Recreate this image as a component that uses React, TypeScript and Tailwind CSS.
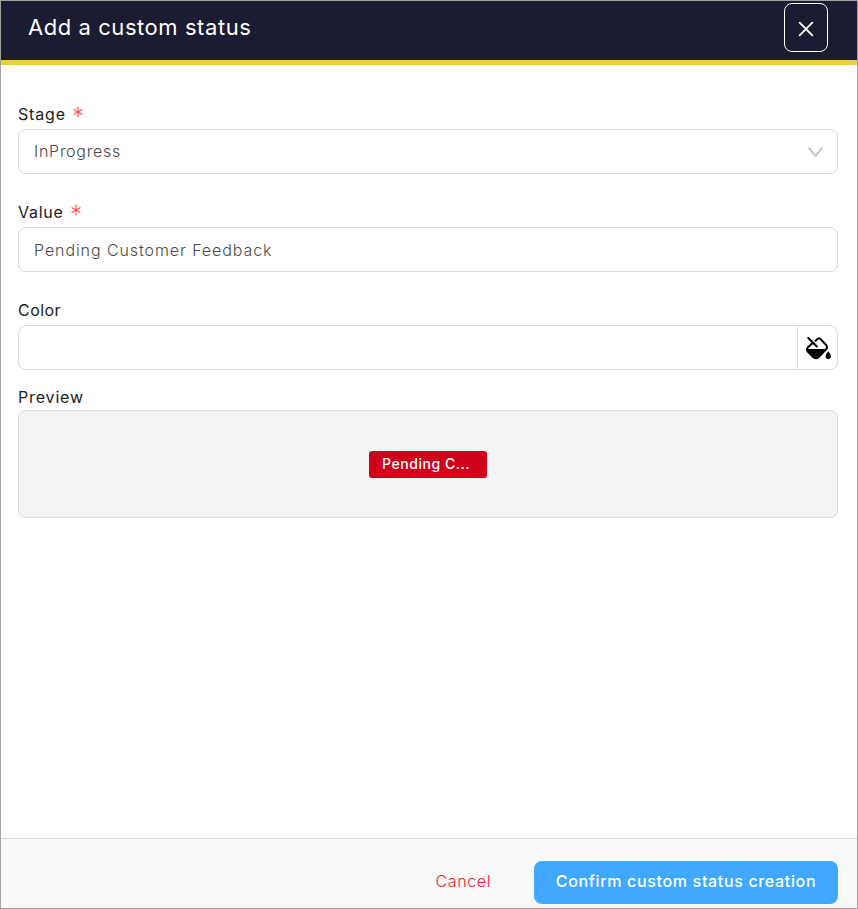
import type { ReactNode } from "react";

function Label({ children, required = false }: { children: ReactNode; required?: boolean }) {
  return (
    <div className="flex h-[30px] items-center gap-[7px] text-[16px] text-[#202020]">
      {children}
      {required && (
        <svg width="10" height="12" viewBox="0 0 10 12" className="mb-[4px] text-[#ff4d4f]" fill="none" stroke="currentColor" strokeWidth="1.2">
          <path d="M5 .8v10.4M.6 3.4l8.8 5.2M9.4 3.4L.6 8.6" />
        </svg>
      )}
    </div>
  );
}

function PaintBucket() {
  return (
    <svg width="26" height="24" viewBox="0 0 26 24" fill="none">
      <path d="M9 4.2L12 1.6Q13 .8 14 1.6L20.2 8Q21.8 10 20.3 12L12.5 20.2Q10 22.4 7.5 20.2L2 14.8Q0 12.5 2 10.3L7.5 5.2" stroke="#000" strokeWidth="2" strokeLinejoin="round" />
      <path d="M.9 12H21.2L12.8 20.8Q10 23 7.2 20.8L1.7 15.3Q.7 14 .9 12Z" fill="#000" />
      <path d="M2.3 1L10.8 9.6" stroke="#000" strokeWidth="2.1" strokeLinecap="round" />
      <path d="M22.3 14.3Q25 17.5 25 19.3A2.7 2.7 0 0 1 19.6 19.3Q19.6 17.5 22.3 14.3Z" fill="#000" />
    </svg>
  );
}

export default function App() {
  return (
    <div className="flex h-[909px] w-[858px] flex-col overflow-hidden border border-[#a2a2a2] bg-white font-['Inter',sans-serif]">
      <header className="flex h-16 shrink-0 items-start justify-between border-b-[5px] border-[#e8d046] bg-[#1b1b32] pr-[29px] pl-[27px] text-white">
        <h1 className="mt-[10px] text-[22px] leading-8 font-normal tracking-[0.56px]">Add a custom status</h1>
        <button aria-label="Close" className="mt-[2px] flex h-[49px] w-11 items-center justify-center rounded-[8px] border border-white pt-[3px]">
          <svg width="16" height="16" viewBox="0 0 16 16" fill="none" stroke="white" strokeWidth="1.9" strokeLinecap="round">
            <path d="M1.7 1.7L14.3 14.3M14.3 1.7L1.7 14.3" />
          </svg>
        </button>
      </header>

      <main className="flex grow flex-col pt-[34px] pr-[19px] pl-[17px]">
        <Label required>
          <span className="tracking-[0.85px]">Stage</span>
        </Label>
        <div className="flex h-[45px] items-center justify-between rounded-[8px] border border-[#d9d9d9] pr-[14px] pl-[15px] text-[16px] font-light text-[#4a4a4a]">
          <span className="pb-[2px] tracking-[0.74px]">InProgress</span>
          <svg width="15" height="10" viewBox="0 0 15 10" fill="none" stroke="#bfbfbf" strokeWidth="1.7">
            <path d="M.8.6L7.5 9L14.2.6" />
          </svg>
        </div>
        <div className="h-[23px]" />
        <Label required>
          <span className="tracking-[0.75px]">Value</span>
        </Label>
        <div className="flex h-[45px] items-center rounded-[8px] border border-[#d9d9d9] pl-[15px] text-[16px] font-light text-[#4a4a4a]">
          <span className="tracking-[0.92px]">Pending Customer Feedback</span>
        </div>
        <div className="h-[23px]" />
        <Label>
          <span className="tracking-[0.45px]">Color</span>
        </Label>
        <div className="flex h-[45px] rounded-[8px] border border-[#d9d9d9]">
          <div className="grow" />
          <button aria-label="Pick color" className="flex w-[40px] items-center justify-center border-l border-[#d9d9d9] pt-[2px] pl-[3px]">
            <PaintBucket />
          </button>
        </div>
        <div className="h-[12px]" />
        <Label>
          <span className="tracking-[0.85px]">Preview</span>
        </Label>
        <div className="-mt-[2px] flex h-[108px] items-center justify-center rounded-[8px] border border-[#d9d9d9] bg-[#f4f4f4]">
          <span className="flex h-[27px] w-[118px] items-center rounded-[3px] bg-[#d0021b] pb-[2px] pl-[13px] text-[14px] font-medium whitespace-nowrap text-white">
            <span className="tracking-[0.55px]">Pending C...</span>
          </span>
        </div>
      </main>

      <footer className="flex h-[70px] shrink-0 items-start justify-end border-t border-[#d5d5d5] bg-[#f9f9f9] pt-[22px] pr-[19px] text-[16px]">
        <button className="mr-[43px] h-[39px] font-light text-[#f5222d]">
          <span className="tracking-[0.6px]">Cancel</span>
        </button>
        <button className="h-[43px] w-[304px] rounded-[8px] bg-[#40a9ff] pb-[4px] font-medium whitespace-nowrap text-white">
          <span className="tracking-[0.66px]">Confirm custom status creation</span>
        </button>
      </footer>
    </div>
  );
}
